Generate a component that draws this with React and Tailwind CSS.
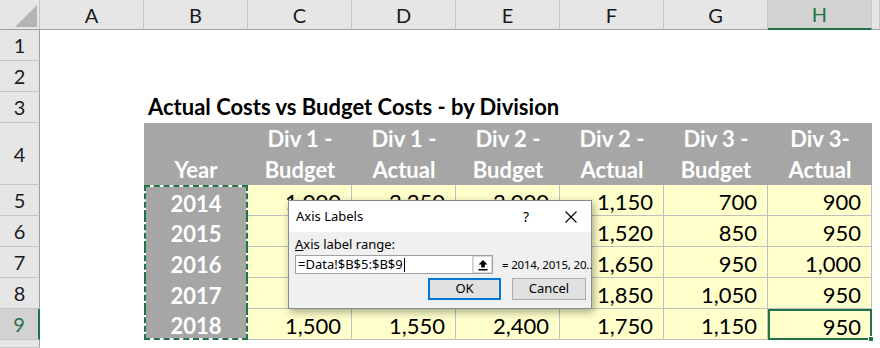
const COLS = ["A", "B", "C", "D", "E", "F", "G", "H", "I"];

const HEADERS = [
  ["", "Year"],
  ["Div 1 -", "Budget"],
  ["Div 1 -", "Actual"],
  ["Div 2 -", "Budget"],
  ["Div 2 -", "Actual"],
  ["Div 3 -", "Budget"],
  ["Div 3-", "Actual"],
];

// C6:E8 sit behind the dialog
const DATA = [
  ["2014", "1,000", "2,250", "2,000", "1,150", "700", "900"],
  ["2015", "900", "1,200", "2,100", "1,520", "850", "950"],
  ["2016", "950", "1,300", "2,200", "1,650", "950", "1,000"],
  ["2017", "800", "1,450", "2,300", "1,850", "1,050", "950"],
  ["2018", "1,500", "1,550", "2,400", "1,750", "1,150", "950"],
];

const sheetFont = { fontFamily: "Lato, 'Liberation Sans', sans-serif" };

const Corner = () => (
  <div className="bg-[#e6e6e6] border-r border-b border-r-[#c6c6c6] border-b-[#9f9f9f] relative">
    <svg width="40" height="30" className="block">
      <polygon points="37,5 37,27 15,27" fill="#b4b4b4" />
    </svg>
  </div>
);

const ColHead = ({ label }) => {
  const selected = label === "H";
  return (
    <div
      className={
        selected
          ? "flex items-center justify-center bg-[#d2d2d2] text-[#217346] text-[20px] border-r border-r-[#c6c6c6] border-b-2 border-b-[#217346]"
          : "flex items-center justify-center bg-[#e6e6e6] text-[#1a1a1a] text-[20px] border-r border-r-[#c6c6c6] border-b border-b-[#9f9f9f]"
      }
    >
      {label === "I" ? "" : label}
    </div>
  );
};

const RowHead = ({ n }) => {
  const selected = n === 9;
  return (
    <div
      className={
        selected
          ? "flex items-center justify-center bg-[#d2d2d2] text-[#217346] text-[20px] border-b border-b-[#c6c6c6] border-r-2 border-r-[#217346]"
          : "flex items-center justify-center bg-[#e6e6e6] text-[#1a1a1a] text-[20px] border-b border-b-[#c6c6c6] border-r border-r-[#9f9f9f]"
      }
    >
      {n <= 9 ? n : ""}
    </div>
  );
};

const renderCell = (r, ci) => {
  const key = r + "-" + ci;
  // title in B3 spills over the empty cells to its right
  if (r === 3 && ci === 1) {
    return (
      <div key={key} className="relative z-[1] flex items-end pl-[4px] pb-[5px] whitespace-nowrap">
        <span className="text-[22px] font-bold text-black leading-none">
          Actual Costs vs Budget Costs - by Division
        </span>
      </div>
    );
  }
  // header row
  if (r === 4 && ci >= 1 && ci <= 7) {
    const [l1, l2] = HEADERS[ci - 1];
    return (
      <div key={key} className="bg-[#a6a6a6] flex flex-col items-center justify-end text-white font-bold text-[22px] leading-[31px]">
        <span>{l1}</span>
        <span>{l2}</span>
      </div>
    );
  }
  if (r >= 5 && r <= 9 && ci >= 1 && ci <= 7) {
    const v = DATA[r - 5][ci - 1];
    if (ci === 1) {
      return (
        <div
          key={key}
          className={
            "bg-[#a6a6a6] bg-clip-padding border-x-2 border-dashed border-[#217346] flex items-center justify-center pt-[3px] text-white font-bold text-[22px] " +
            (r === 5 ? "border-t-2 " : "") +
            (r === 9 ? "border-b-2" : "")
          }
        >
          {v}
        </div>
      );
    }
    if (r === 9 && ci === 7) {
      return (
        <div key={key} className="relative bg-[#ffffcc] border-2 border-[#217346] flex items-center justify-end pr-[9px] pt-[3px] text-[22px] text-black">
          {v}
          <span className="absolute z-10 -right-[4px] -bottom-[4px] w-[6px] h-[6px] bg-[#217346] border border-white" />
        </div>
      );
    }
    return (
      <div key={key} className="bg-[#ffffcc] border-r border-b border-[#bfbfbf] flex items-center justify-end pr-[10px] pt-[3px] text-[22px] text-black">
        {v}
      </div>
    );
  }
  return <div key={key} />;
};

const UploadIcon = () => (
  <svg width="12" height="12" viewBox="0 0 12 12">
    <path d="M6 1 L1.5 5.5 H4.2 V8.5 H7.8 V5.5 H10.5 Z" fill="#000" />
    <rect x="1.5" y="10" width="9" height="1.5" fill="#000" />
  </svg>
);

const CloseIcon = () => (
  <svg width="12" height="12" viewBox="0 0 12 12">
    <path d="M0.5 0.5 L11.5 11.5 M11.5 0.5 L0.5 11.5" stroke="#000" strokeWidth="1.1" />
  </svg>
);

const AxisDialog = () => (
  <div
    className="absolute z-20 left-[288px] top-[200px] w-[304px] h-[109px] bg-[#f0f0f0] border border-[#8a8a8a] shadow-[2px_3px_8px_rgba(0,0,0,0.35)] flex flex-col text-[13px] text-black"
    style={{ fontFamily: "'Noto Sans', 'Open Sans', sans-serif" }}
  >
    <div className="h-[31px] bg-white flex items-center pl-[7px] pr-[14px]">
      <span className="flex-1">Axis Labels</span>
      <span className="mr-[36px] text-[14px]">?</span>
      <CloseIcon />
    </div>
    <div className="flex flex-col pl-[6px] pt-[4px]">
      <div className="leading-[17px]">
        <span className="underline">A</span>xis label range:
      </div>
      <div className="flex items-center mt-[2px]">
        <div className="shrink-0 w-[198px] h-[19px] bg-white border border-[#a0a0a0] flex items-center">
          <div className="flex-1 flex items-center pl-[2px] leading-none">
            =Data!$B$5:$B$9<span className="inline-block w-px h-[14px] bg-black ml-px" />
          </div>
          <div className="w-[20px] h-[17px] bg-white border-l border-[#cfcfcf] shadow-[inset_0_0_0_1px_#d9d9d9] flex items-center justify-center">
            <UploadIcon />
          </div>
        </div>
        <span className="ml-[9px] text-[11.5px] tracking-[-0.2px] whitespace-nowrap">= 2014, 2015, 20..</span>
      </div>
      <div className="flex justify-end gap-[11px] mt-[4px] pr-[5px]">
        <button className="w-[73px] h-[22px] bg-[#e1e1e1] border-2 border-[#0078d7] flex items-center justify-center">
          OK
        </button>
        <button className="w-[74px] h-[22px] bg-[#e1e1e1] border border-[#adadad] flex items-center justify-center">
          Cancel
        </button>
      </div>
    </div>
  </div>
);

const App = () => {
  const rowNums = [1, 2, 3, 4, 5, 6, 7, 8, 9, 10];
  return (
    <div className="relative w-[880px] h-[348px] overflow-hidden bg-white" style={sheetFont}>
      <div className="grid w-[880px] h-[348px] grid-cols-[40px_repeat(8,104px)_1fr] grid-rows-[30px_31px_31px_31px_62px_31px_31px_31px_31px_31px_1fr]">
        <Corner />
        {COLS.map((c) => (
          <ColHead key={c} label={c} />
        ))}
        {rowNums.map((r) => [
          <RowHead key={"h" + r} n={r} />,
          ...COLS.map((c, ci) => renderCell(r, ci)),
        ])}
      </div>
      <AxisDialog />
    </div>
  );
};

export default App;
